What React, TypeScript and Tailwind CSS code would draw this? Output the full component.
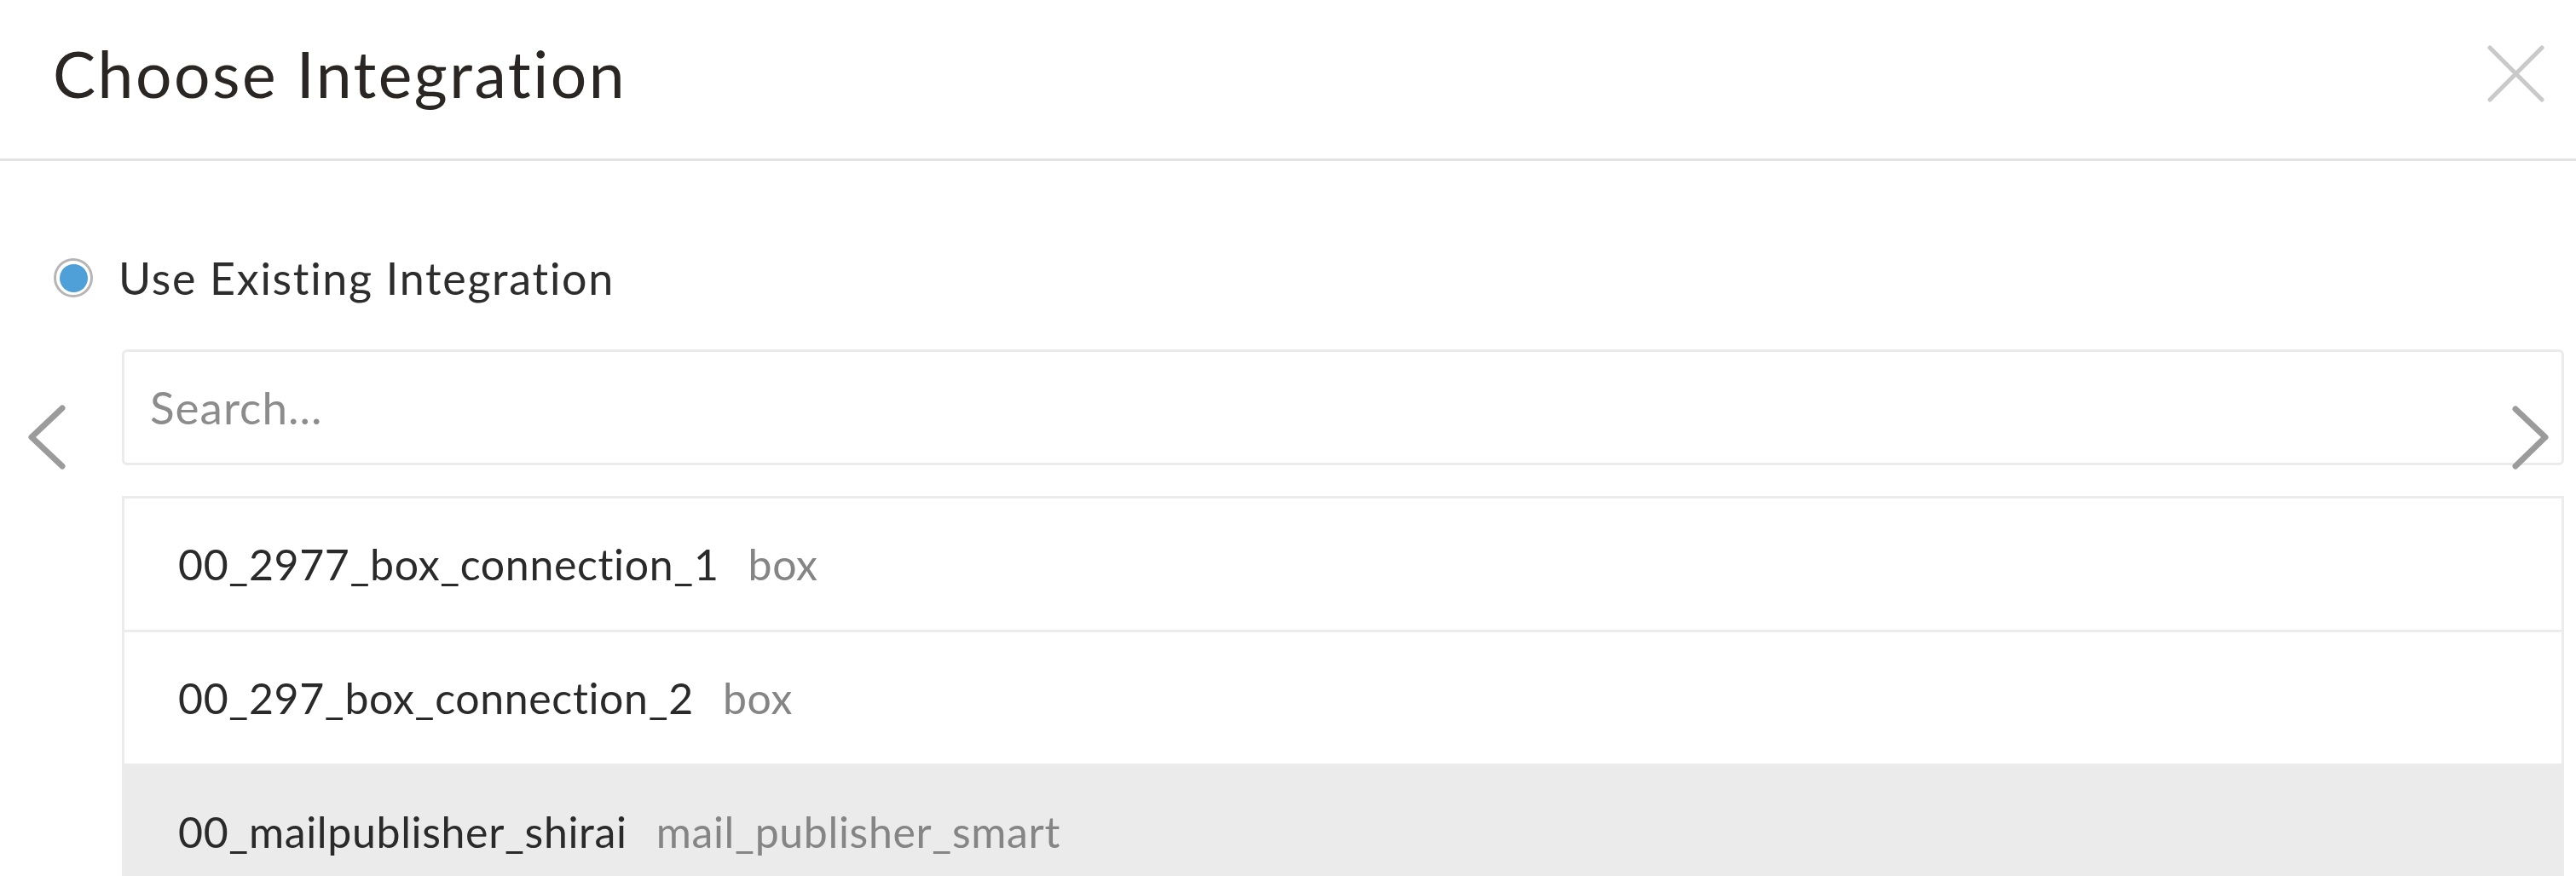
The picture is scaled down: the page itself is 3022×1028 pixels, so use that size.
import React from 'react';

type Integration = { name: string; type: string };

const ITEMS: Integration[] = [
  { name: '00_2977_box_connection_1', type: 'box' },
  { name: '00_297_box_connection_2', type: 'box' },
  { name: '00_mailpublisher_shirai', type: 'mail_publisher_smart' },
];

const Chevron = ({ dir }: { dir: 'left' | 'right' }) => (
  <svg width="44" height="76" viewBox="0 0 44 76" fill="none">
    {dir === 'left' ? (
      <path d="M40 4 L4 38 L40 72" stroke="#9b9b9b" strokeWidth="7" strokeLinecap="round" strokeLinejoin="round" />
    ) : (
      <path d="M4 4 L39 37 L4 71" stroke="#9b9b9b" strokeWidth="7" strokeLinecap="round" strokeLinejoin="round" />
    )}
  </svg>
);

export default function App() {
  const selected = 2;

  return (
    <div className="h-[1028px] w-full overflow-hidden bg-white font-['Lato',sans-serif] text-[#2b2928] [font-variant-ligatures:none]">
      {/* Header */}
      <div className="flex h-[189px] items-center justify-between border-b-[3px] border-[#e2e2e2] pl-[62px] pr-[36px]">
        <h1 className="pb-[14px] text-[75px] font-normal leading-none tracking-[2.5px] text-[#292624]">Choose Integration</h1>
        <button type="button" className="mb-[14px] flex h-[70px] w-[70px] items-center justify-center">
          <svg width="68" height="68" viewBox="0 0 68 68" fill="none">
            <path d="M4 4 L65 65 M65 4 L4 65" stroke="#c9c9c9" strokeWidth="5" strokeLinecap="round" />
          </svg>
        </button>
      </div>

      {/* Body */}
      <div className="pt-[107px]">
        <label className="flex items-center gap-[30px] pl-[63px]">
          <span className="flex h-[46px] w-[46px] items-center justify-center rounded-full border-[3px] border-[#b5b5b5] bg-white">
            <span className="h-[33px] w-[33px] rounded-full bg-[#4f9fd8]" />
          </span>
          <span className="text-[52px] leading-[60px] tracking-[1.7px] text-[#2d2d2d]">Use Existing Integration</span>
        </label>

        <div className="relative mt-[54px] pl-[143px] pr-[14px]">
          <div className="absolute left-[33px] top-[65px]">
            <Chevron dir="left" />
          </div>
          <div className="absolute right-[31px] top-[66px]">
            <Chevron dir="right" />
          </div>

          <div className="flex h-[136px] items-center rounded-[6px] border-[3px] border-[#ebebeb] px-[30px]">
            <input
              type="text"
              placeholder="Search..."
              className="w-full bg-transparent text-[53px] tracking-[1px] text-[#2d2d2d] outline-none placeholder:text-[#8c8c8c]"
            />
          </div>

          <div className="mt-[36px] border-[3px] border-b-0 border-[#ececec]">
            {ITEMS.map((it, i) => (
              <div
                key={it.name}
                className={`flex h-[157px] items-center border-b-[3px] border-[#ececec] pl-[63px] tracking-[0.65px] ${i === selected ? 'bg-[#ebebeb]' : 'bg-white'}`}
              >
                <span className="text-[50px] text-[#2a2a2a]">{it.name}</span>
                <span className="ml-[34px] text-[50px] text-[#858585]">{it.type}</span>
              </div>
            ))}
          </div>
        </div>
      </div>
    </div>
  );
}
